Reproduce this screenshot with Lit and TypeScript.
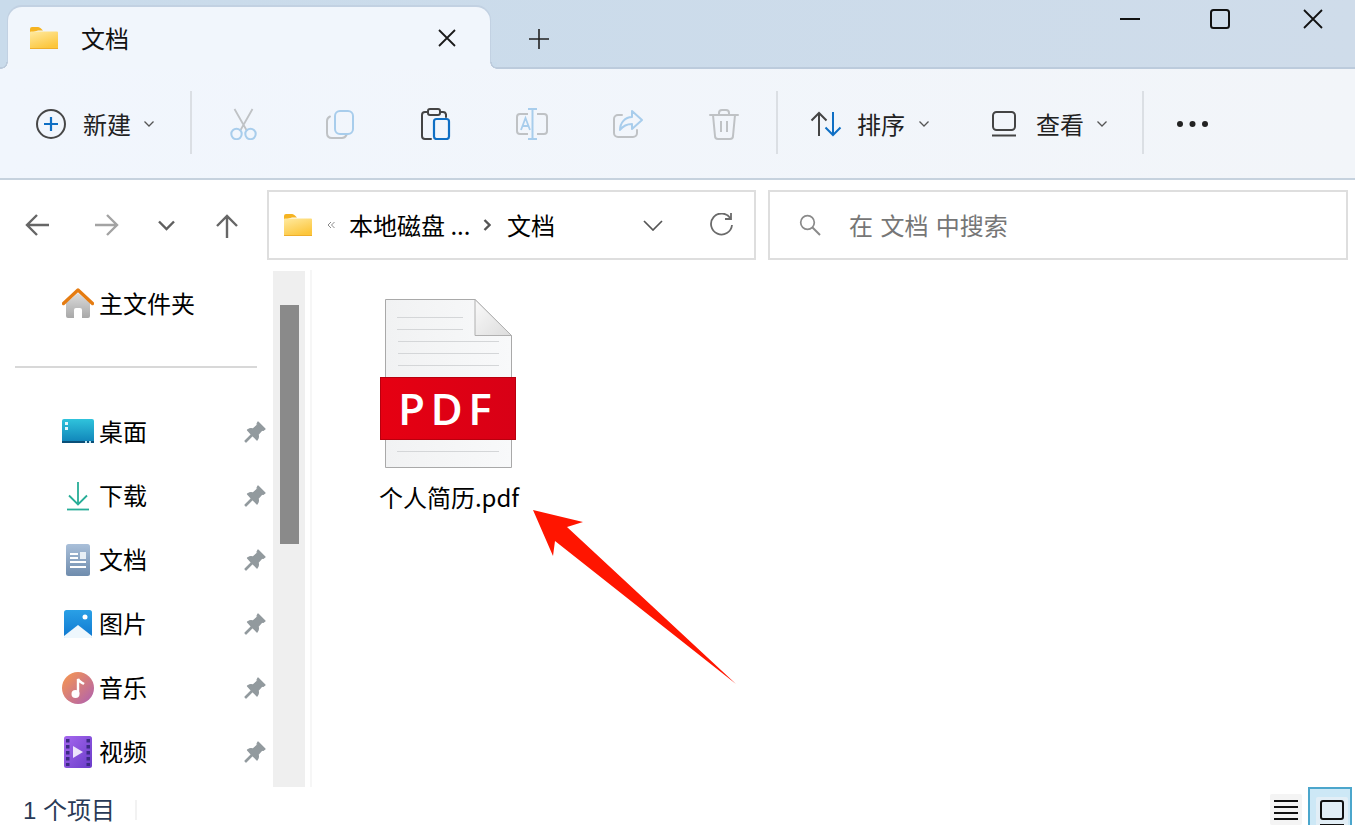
import { LitElement, html, css, svg } from "lit";
import { customElement } from "lit/decorators.js";

const BLUE = "#0f6fc4", DBLUE = "#a8cdec", DGRAY = "#bfc2c5";

const ic = (w: number, h: number, body: unknown, cls = "") =>
  html`<svg class="ic ${cls}" width=${w} height=${h} viewBox="0 0 ${w} ${h}" fill="none">${body}</svg>`;

const chevronSmall = () => ic(12, 8, svg`<path d="M1.5 1.5 6 6l4.5-4.5" stroke="#555" stroke-width="1.3"/>`);

const folder = () => ic(28, 22, svg`
  <defs><linearGradient id="fg" x1="0" y1="0" x2="0.5" y2="1"><stop offset="0" stop-color="#ffeaa0"/><stop offset="1" stop-color="#fcc63c"/></linearGradient></defs>
  <path d="M0 2a2 2 0 0 1 2-2h6c1.500 0 2.500 1 3.500 2l1.500 1.500H8L0 6z" fill="#f5b321"/>
  <path d="M0 5.500a1 1 0 0 1 1-1h26a1 1 0 0 1 1 1V21a1 1 0 0 1-1 1H1a1 1 0 0 1-1-1z" fill="url(#fg)"/>
  <rect y="21" width="28" height="1" fill="#eeae2c"/>`);

const newIcon = () => ic(30, 30, svg`
  <circle cx="15" cy="15" r="14" stroke="#474747" stroke-width="2"/>
  <path d="M15 8v14M8 15h14" stroke="${BLUE}" stroke-width="2.200"/>`);

const cut = () => ic(32, 32, svg`
  <path d="M6.500 1 19 23M24.500 1 12 23" stroke="${DGRAY}" stroke-width="1.800"/>
  <circle cx="8.500" cy="26" r="5.200" stroke="${DBLUE}" stroke-width="2"/>
  <circle cx="22.500" cy="26" r="5.200" stroke="${DBLUE}" stroke-width="2"/>`);

const copy = () => ic(32, 32, svg`
  <path d="M6 8.500C4 9.500 3 11 3 13v12c0 3 2 5 5 5h10c2 0 3.500-1 4.500-3" stroke="${DGRAY}" stroke-width="2" stroke-linecap="round"/>
  <rect x="11" y="3" width="18" height="23" rx="5" stroke="${DBLUE}" stroke-width="2"/>`);

const paste = () => ic(32, 32, svg`
  <path d="M8 4H5a3 3 0 0 0-3 3v21a3 3 0 0 0 3 3h6M20 4h3a3 3 0 0 1 3 2.500V9" stroke="#444" stroke-width="2" stroke-linecap="round"/>
  <rect x="8" y="1" width="12" height="6" rx="2" stroke="#444" stroke-width="2"/>
  <rect x="14" y="11" width="15" height="20" rx="2.500" stroke="${BLUE}" stroke-width="2.200"/>`);

const rename = () => ic(32, 32, svg`
  <path d="M12 6H4a3 3 0 0 0-3 3v14a3 3 0 0 0 3 3h8M21 6h7a3 3 0 0 1 3 3v14a3 3 0 0 1-3 3h-7" stroke="${DGRAY}" stroke-width="2"/>
  <path d="M12 1h9M12 31h9M16.500 1v30" stroke="${DBLUE}" stroke-width="2"/>
  <path d="M5 22 9.500 10l4.500 12M6.500 18h6" stroke="${DBLUE}" stroke-width="1.800"/>`);

const share = () => ic(32, 32, svg`
  <path d="M10 7H6a4 4 0 0 0-4 4v14a4 4 0 0 0 4 4h15a4 4 0 0 0 4-4v-3" stroke="${DGRAY}" stroke-width="2" stroke-linecap="round"/>
  <path d="M20 3l10 9-10 9v-5c-5 0-9 2-12 6 0-7 5-13 12-13z" stroke="${DBLUE}" stroke-width="2" stroke-linejoin="round"/>`);

const trash = () => ic(32, 32, svg`
  <path d="M2 7h28" stroke="${DGRAY}" stroke-width="2" stroke-linecap="round"/>
  <path d="M11 7V5a3 3 0 0 1 3-3h4a3 3 0 0 1 3 3v2M5 7l2 21a3 3 0 0 0 3 3h12a3 3 0 0 0 3-3l2-21M13 13v11M19 13v11" stroke="${DGRAY}" stroke-width="2"/>`);

const sortIcon = () => ic(32, 26, svg`
  <path d="M9 25V2M1.500 9.500 9 2l7.500 7.500" stroke="#444" stroke-width="2"/>
  <path d="M23 1v23M15.500 16.500 23 24l7.500-7.500" stroke="${BLUE}" stroke-width="2"/>`);

const viewIcon = () => ic(24, 26, svg`
  <rect x="1" y="1" width="22" height="18" rx="3.500" stroke="#444" stroke-width="2"/>
  <path d="M0 24.500h24" stroke="#444" stroke-width="2"/>`);

const dots = () => ic(31, 6, svg`
  <circle cx="3" cy="3" r="3" fill="#222"/><circle cx="15.500" cy="3" r="3" fill="#222"/><circle cx="28" cy="3" r="3" fill="#222"/>`);

const pin = () => ic(22, 22, svg`
  <path d="M14 1l7 7-2 1.500-1-.5-4 4.500c.8 2 .3 4-1 5.500L8.500 14.500 2 21l-1-1 6.500-6.500L3.500 9c1.500-1.300 3.500-1.800 5.500-1l4.500-4-.5-1z" fill="#929a9e" stroke="#929a9e" stroke-width="1.200" stroke-linejoin="round"/>`);

const home = () => ic(32, 32, svg`
  <defs><linearGradient id="hb" x1="0" y1="0" x2="0" y2="1"><stop offset="0" stop-color="#dcdcdc"/><stop offset="1" stop-color="#a8a8a8"/></linearGradient></defs>
  <path d="M4 15 16 5l12 10v13a2 2 0 0 1-2 2h-6v-8a2 2 0 0 0-2-2h-4a2 2 0 0 0-2 2v8H6a2 2 0 0 1-2-2z" fill="url(#hb)"/>
  <path d="M1.500 15.500 16 2l14.500 13.500" stroke="#e57c12" stroke-width="3.400" stroke-linecap="round" stroke-linejoin="round"/>`);

const desktop = () => ic(32, 32, svg`
  <defs><linearGradient id="dk" x1="0" y1="0" x2="0" y2="1"><stop offset="0" stop-color="#2fc3dc"/><stop offset="1" stop-color="#0f82b8"/></linearGradient></defs>
  <rect y="3" width="32" height="24" rx="2" fill="url(#dk)"/>
  <rect y="25" width="32" height="2" fill="#0a4f78"/>
  <rect x="3" y="6" width="3" height="3" fill="#e4f6fb"/><rect x="3" y="11" width="3" height="3" fill="#e4f6fb"/>
  <rect x="23" y="25" width="2" height="2" fill="#bfe6f2"/><rect x="27" y="25" width="2" height="2" fill="#bfe6f2"/>`);

const download = () => ic(32, 32, svg`
  <path d="M16 2v22M7 15.500l9 9 9-9" stroke="#27ad97" stroke-width="1.800"/>
  <path d="M5 29.500h22" stroke="#27ad97" stroke-width="1.800"/>`);

const docIcon = () => ic(32, 32, svg`
  <defs><linearGradient id="dc" x1="0" y1="0" x2="0" y2="1"><stop offset="0" stop-color="#a9bfd9"/><stop offset="1" stop-color="#6f8cad"/></linearGradient></defs>
  <rect x="4" width="24" height="32" rx="2.500" fill="url(#dc)"/>
  <path d="M8 10h8M8 14h8M8 18h16M8 23h16" stroke="#fff" stroke-width="2"/>
  <rect x="18" y="8" width="6" height="7" fill="#e8eff6"/>`);

const pics = () => ic(32, 32, svg`
  <defs><linearGradient id="pc" x1="0" y1="0" x2="0" y2="1"><stop offset="0" stop-color="#2aa0e6"/><stop offset="1" stop-color="#0f78d0"/></linearGradient></defs>
  <rect x="2" y="2" width="28" height="28" rx="2.500" fill="url(#pc)"/>
  <path d="M2 28 16 17l14 11v1a1 1 0 0 1-1 1H3a1 1 0 0 1-1-1z" fill="#eef7fd"/>
  <circle cx="23" cy="9" r="2.500" fill="#fff"/>`);

const music = () => ic(32, 32, svg`
  <defs><linearGradient id="ms" x1="0" y1="0" x2="1" y2="1"><stop offset="0.100" stop-color="#f29356"/><stop offset="0.900" stop-color="#b565a8"/></linearGradient></defs>
  <circle cx="16" cy="16" r="16" fill="url(#ms)"/>
  <circle cx="13.500" cy="22" r="4" fill="#fff"/>
  <path d="M16 22V7c1 3 4 3.500 6 5" stroke="#fff" stroke-width="2.400"/>`);

const video = () => ic(32, 32, svg`
  <defs><linearGradient id="vd" x1="0" y1="0" x2="1" y2="1"><stop offset="0" stop-color="#a567ee"/><stop offset="1" stop-color="#6a3cc9"/></linearGradient></defs>
  <rect x="2" width="28" height="32" rx="2.500" fill="url(#vd)"/>
  <g fill="#3c2a85">
    <rect x="4" y="3" width="3.500" height="3.500"/><rect x="4" y="9" width="3.500" height="3.500"/><rect x="4" y="15" width="3.500" height="3.500"/><rect x="4" y="21" width="3.500" height="3.500"/><rect x="4" y="27" width="3.500" height="3"/>
    <rect x="24.500" y="3" width="3.500" height="3.500"/><rect x="24.500" y="9" width="3.500" height="3.500"/><rect x="24.500" y="15" width="3.500" height="3.500"/><rect x="24.500" y="21" width="3.500" height="3.500"/><rect x="24.500" y="27" width="3.500" height="3"/>
  </g>
  <path d="M11 10v12l10-6z" fill="#ece3fb"/>`);

const pdfIcon = () => html`<svg class="pdf" width="140" height="170" viewBox="379 299 140 170" fill="none">
  <defs>
    <linearGradient id="pg" x1="0" y1="0" x2="1" y2="0"><stop offset="0" stop-color="#f1f2f3"/><stop offset="1" stop-color="#f8f9fa"/></linearGradient>
    <linearGradient id="fo" x1="0" y1="0" x2="1" y2="1"><stop offset="0" stop-color="#fafafa"/><stop offset="1" stop-color="#dcdcdc"/></linearGradient>
    <linearGradient id="rd" x1="0" y1="0" x2="1" y2="0"><stop offset="0" stop-color="#e60012"/><stop offset="1" stop-color="#d80016"/></linearGradient>
  </defs>
  <path d="M385.500 299.500H475l36.500 36V467.500h-126z" fill="url(#pg)" stroke="#a9a9a9"/>
  <path d="M475 299.500V335.500H511.500z" fill="url(#fo)" stroke="#b0b0b0"/>
  <path d="M397 317.500h66M397 329.500h66M398 341.500h101M398 353.500h101M398 365.500h101M397 451.500h102" stroke="#d4d6d8"/>
  <rect x="380" y="377" width="136" height="63" fill="url(#rd)"/>
  <rect x="380.500" y="377.500" width="135" height="62" stroke="#b8000e"/>
  <text class="pdft" x="398" y="424.500">PDF</text>
</svg>`;

@customElement("app-root")
export class AppRoot extends LitElement {
  static styles = css`
    :host {
      display: grid;
      grid-template-rows: 69px 111px 90px 517px 38px;
      width: 1355px;
      height: 825px;
      overflow: hidden;
      position: relative;
      background: #fff;
      color: #000;
      font-family: "Noto Sans CJK SC", "Noto Sans", sans-serif;
      font-size: 24px;
      line-height: 32px;
    }
    .ic { display: block; flex: none; }

    .titlebar {
      display: flex;
      align-items: flex-start;
      background: linear-gradient(90deg, #c9dbeb, #cfdcea);
      box-shadow: inset 0 -2px 0 #bccbdc;
    }
    .tab {
      position: relative;
      box-sizing: border-box;
      display: flex;
      align-items: center;
      margin: 7px 0 0 8px;
      padding-left: 22px;
      width: 482px;
      height: 62px;
      background: #f1f6fc;
      border-radius: 14px 14px 0 0;
      box-shadow: 0 -1px 0 1px #c2d1e2;
      clip-path: inset(-3px -10px 0 -10px);
      color: #111;
    }
    .tab::before, .tab::after {
      content: "";
      position: absolute;
      bottom: 0;
      width: 7px;
      height: 7px;
    }
    .tab::before {
      left: -7px;
      background: radial-gradient(circle at 0 0, #c9dbeb 5px, #bccbdc 5.500px, #bccbdc 6.500px, #f1f6fc 7px);
    }
    .tab::after {
      right: -7px;
      background: radial-gradient(circle at 100% 0, #c9dbeb 5px, #bccbdc 5.500px, #bccbdc 6.500px, #f1f6fc 7px);
    }
    .tab-text { margin-left: 23px; }
    .tab-close { margin-left: 309px; }
    .plus { margin: 29px 0 0 39px; }
    .win { display: flex; margin: 9px 32px 0 auto; }
    .win .max { margin-left: 70px; }
    .win .cls { margin-left: 73px; }

    .toolbar {
      display: flex;
      align-items: center;
      background: linear-gradient(90deg, #f1f6fd, #f2f5f9);
      box-shadow: inset 0 -2px 0 #c6d2de;
      padding-bottom: 2px;
      box-sizing: border-box;
      color: #222;
    }
    .group { display: flex; align-items: center; }
    .g-new { padding-left: 36px; width: 154px; }
    .g-new .label { margin-left: 17px; }
    .label { line-height: 32px; }
    .chev { margin-left: 12px; }
    .vsep { width: 2px; height: 63px; background: #dbdfe4; flex: none; margin-top: -3px; }
    .cells { display: flex; margin: 0 4px; }
    .cell { width: 96px; display: flex; justify-content: center; }
    .g-sort { padding-left: 32px; }
    .g-sort .label { margin-left: 15px; }
    .g-sort .chev { margin-left: 13px; }
    .g-view { margin-left: 62px; }
    .g-view .label { margin-left: 20px; }
    .s3 { margin-left: 34px; }
    .more { margin-left: 33px; }

    .nav { display: flex; align-items: flex-start; padding-top: 10px; box-sizing: border-box; }
    .nbtn { margin-top: 24px; }
    .n1 { margin-left: 25px; }
    .n2 { margin-left: 46px; }
    .n3 { margin: 30px 0 0 39px; }
    .n4 { margin-left: 41px; }
    .field {
      box-sizing: border-box;
      height: 70px;
      border: 2px solid #dedede;
      display: flex;
      align-items: center;
    }
    .addr { width: 489px; margin-left: 29px; padding-left: 15px; }
    .laquo { margin-left: 15px; }
    .crumb { margin-left: 14px; width: 134px; }
    .sepg { flex: none; }
    .crumb2 { margin-left: 16px; }
    .a-chev { margin-left: 88px; }
    .a-ref { margin-left: 46px; }
    .search { width: 580px; margin-left: 12px; padding-left: 29px; color: #767676; }
    .search span { margin-left: 28px; word-spacing: 2px; }

    .body { display: flex; min-height: 0; }
    .side { width: 273px; flex: none; padding-top: 2px; box-sizing: border-box; }
    .row {
      display: flex;
      align-items: center;
      height: 64px;
      padding: 0 7px 0 62px;
    }
    .row span { margin: 0 0 2px 5px; flex: 1; }
    .side hr { border: 0; height: 2px; background: #d8d8d8; margin: 30px 16px 32px 15px; }
    .sb { width: 32px; flex: none; margin-top: 1px; background: #efefef; box-sizing: border-box; padding: 34px 6px 0 7px; }
    .thumb { height: 239px; background: #8a8a8a; }
    .rule { width: 2px; margin-left: 5px; background: #f6f6f6; flex: none; }
    .main { flex: 1; padding: 29px 0 0 67px; }
    .file { display: inline-flex; flex-direction: column; align-items: center; width: 140px; }
    .pdf { display: block; }
    .pdft {
      fill: #fff;
      font-family: "Open Sans", "Noto Sans", sans-serif;
      font-size: 44px;
      font-weight: 600;
      letter-spacing: 5.500px;
    }
    .fname { margin-top: 12px; white-space: nowrap; line-height: 32px; }

    .status { display: flex; align-items: flex-start; padding-left: 23px; color: #2a3a56; }
    .count {
      margin-top: 10px;
      line-height: 28px;
      font-family: "Liberation Sans", "Noto Sans CJK SC", sans-serif;
    }
    .ssep { width: 2px; height: 20px; background: #f2f2f2; margin: 13px 0 0 20px; }
    .vbtns { display: flex; margin-left: auto; align-items: flex-start; padding-right: 3px; }
    .vlist { width: 32px; height: 31px; margin-top: 7px; background: #f4f4f4; display: flex; justify-content: center; padding-top: 6px; box-sizing: border-box; border-radius: 2px; }
    .vsel {
      box-sizing: border-box;
      width: 44px;
      height: 38px;
      margin-left: 6px;
      background: #cde8f6;
      border: 2px solid #4ba6cc;
      border-bottom: 0;
      padding: 8px 2px 0 6px;
    }
    .vsel div { background: #e2eef6; height: 30px; display: flex; justify-content: center; padding-top: 3px; box-sizing: border-box; border-radius: 2px; }
    .arrow { position: absolute; left: 533px; top: 510px; pointer-events: none; }
  `;

  render() {
    const side: [unknown, string][] = [
      [desktop(), "桌面"], [download(), "下载"], [docIcon(), "文档"],
      [pics(), "图片"], [music(), "音乐"], [video(), "视频"],
    ];
    const cells = [cut(), copy(), paste(), rename(), share(), trash()];
    return html`
      <div class="titlebar">
        <div class="tab">
          ${folder()}
          <span class="tab-text">文档</span>
          ${ic(18, 18, svg`<path d="M1 1l16 16M17 1 1 17" stroke="#1a1a1a" stroke-width="1.800"/>`, "tab-close")}
        </div>
        ${ic(20, 20, svg`<path d="M10 0v20M0 10h20" stroke="#222" stroke-width="1.600"/>`, "plus")}
        <div class="win">
          ${ic(20, 20, svg`<path d="M0 10h20" stroke="#111" stroke-width="2"/>`)}
          ${ic(20, 20, svg`<rect x="1" y="1" width="18" height="18" rx="2.500" stroke="#111" stroke-width="2"/>`, "max")}
          ${ic(20, 20, svg`<path d="M1 1l18 18M19 1 1 19" stroke="#111" stroke-width="1.800"/>`, "cls")}
        </div>
      </div>

      <div class="toolbar">
        <div class="group g-new">${newIcon()}<span class="label">新建</span><span class="chev">${chevronSmall()}</span></div>
        <div class="vsep"></div>
        <div class="cells">${cells.map((c) => html`<div class="cell">${c}</div>`)}</div>
        <div class="vsep"></div>
        <div class="group g-sort">${sortIcon()}<span class="label">排序</span><span class="chev">${chevronSmall()}</span></div>
        <div class="group g-view">${viewIcon()}<span class="label">查看</span><span class="chev">${chevronSmall()}</span></div>
        <div class="vsep s3"></div>
        <div class="more">${dots()}</div>
      </div>

      <div class="nav">
        ${ic(24, 22, svg`<path d="M24 11H2M12 1 2 11l10 10" stroke="#666" stroke-width="2.400"/>`, "nbtn n1")}
        ${ic(24, 22, svg`<path d="M0 11h22M12 1l10 10-10 10" stroke="#a3a3a3" stroke-width="2.400"/>`, "nbtn n2")}
        ${ic(17, 11, svg`<path d="M1 1.500 8.500 9 16 1.500" stroke="#5f5f5f" stroke-width="2.400"/>`, "n3")}
        ${ic(22, 24, svg`<path d="M11 24V2M1 12 11 2l10 10" stroke="#666" stroke-width="2.400"/>`, "nbtn n4")}
        <div class="field addr">
          ${folder()}
          ${ic(8, 8, svg`<path d="M4 1 1 4l3 3M7.500 1l-3 3 3 3" stroke="#8a8a8a" stroke-width="1"/>`, "laquo")}
          <span class="crumb">本地磁盘 ...</span>
          ${ic(8, 12, svg`<path d="M1.500 1 6.500 6l-5 5" stroke="#555" stroke-width="2.400"/>`, "sepg")}
          <span class="crumb2">文档</span>
          ${ic(20, 11, svg`<path d="M1 1l9 9 9-9" stroke="#555" stroke-width="1.700"/>`, "a-chev")}
          ${ic(24, 24, svg`<path d="M21.500 5.500A10.500 10.500 0 1 0 23 12M22 0v6h-6" stroke="#6a6a6a" stroke-width="1.800"/>`, "a-ref")}
        </div>
        <div class="field search">
          ${ic(22, 22, svg`<circle cx="8.500" cy="8.500" r="6.800" stroke="#8a8a8a" stroke-width="1.700"/><path d="M13.500 13.500 21 21" stroke="#8a8a8a" stroke-width="1.900"/>`)}
          <span>在 文档 中搜索</span>
        </div>
      </div>

      <div class="body">
        <div class="side">
          <div class="row">${home()}<span>主文件夹</span></div>
          <hr />
          ${side.map(([i, t]) => html`<div class="row">${i}<span>${t}</span>${pin()}</div>`)}
        </div>
        <div class="sb"><div class="thumb"></div></div>
        <div class="rule"></div>
        <div class="main">
          <div class="file">${pdfIcon()}<div class="fname">个人简历.pdf</div></div>
        </div>
      </div>

      <div class="status">
        <span class="count">1 个项目</span>
        <div class="ssep"></div>
        <div class="vbtns">
          <div class="vlist">${ic(24, 20, svg`<path d="M0 1h24M0 7h24M0 13h24M0 19h24" stroke="#111" stroke-width="2"/>`)}</div>
          <div class="vsel"><div>${ic(26, 27, svg`<rect x="2" y="1" width="22" height="18" rx="2" stroke="#111" stroke-width="2"/><path d="M1 25h24" stroke="#111" stroke-width="2"/>`)}</div></div>
        </div>
      </div>

      <svg class="arrow" width="203" height="175" viewBox="533 510 203 175">
        <polygon points="533,510 583,522 567,527 736,684 555,541 553,556" fill="#ff1500"></polygon>
      </svg>
    `;
  }
}
